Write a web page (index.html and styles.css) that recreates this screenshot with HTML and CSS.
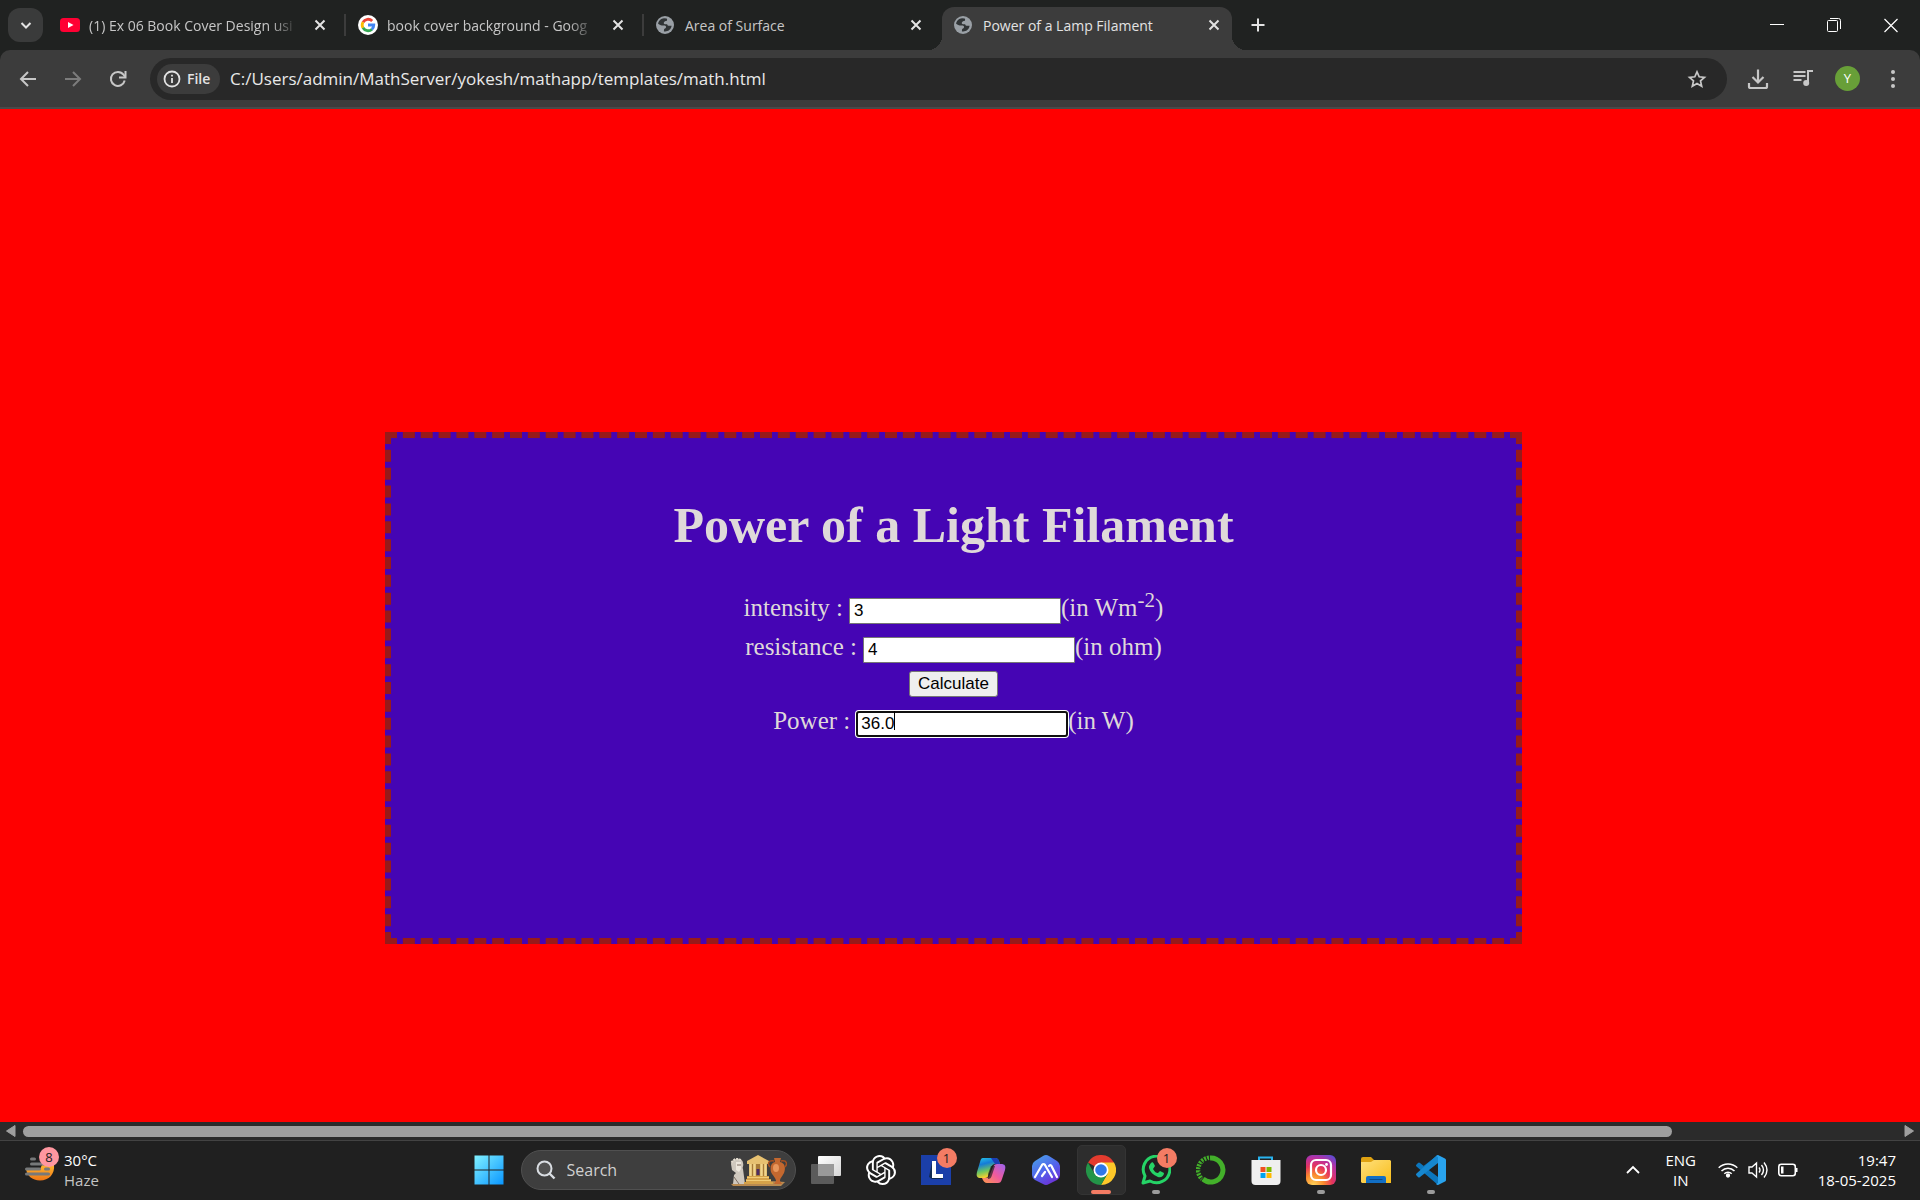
FILE: index.html
```html
<!DOCTYPE html>
<html lang="en">
<head>
<meta charset="utf-8">
<title>Power of a Lamp Filament</title>
<link rel="stylesheet" href="styles.css">
</head>
<body>
<svg class="defs" aria-hidden="true">
  <symbol id="x" viewBox="0 0 20 20"><path d="M5.500 5.500l9 9M14.500 5.500l-9 9" fill="none" stroke="currentColor" stroke-width="2"/></symbol>
  <symbol id="globe" viewBox="0 0 20 20"><circle cx="9" cy="10" r="9" fill="#9aa0a6"/><path d="M8 3.200c-3 .3-5.500 2.600-5.900 5.600 1 .9 2.300 1.500 3.900 1.600l2.600.2c1 .1 1.500.8 1.400 1.700-.1.800-.8 1.100-1.500 1.500-.6.400-.5 1.400-.6 2.600 1.700.4 3.800 0 5.300-1.300 1.300-1.100 2.200-2.500 2.400-4.300l-3.100-.1c-.9-.1-1.200-.7-1.300-1.500-1-.1-2.200.2-2.900-.3-.8-.5-.6-1.600.1-2.200.8-.6 2-.4 2.500-1.100.4-.7.200-1.400-.2-2.100z" fill="#303436"/></symbol>
</svg>

<header class="browser">
  <div class="tabstrip">
    <button class="tab-search" aria-label="Search tabs"><svg width="20" height="20" viewBox="0 0 20 20"><path d="M5.500 8l4.500 4.500L14.500 8" fill="none" stroke="#e3e3e3" stroke-width="2"/></svg></button>
    <nav class="tabs">
      <div class="tab divided">
        <svg class="favicon" viewBox="0 0 20 20"><rect y="3" width="20" height="14" rx="3.500" fill="#ff0033"/><path d="M8 7l5.500 3L8 13z" fill="#fff"/></svg>
        <a class="tab-title faded" href="#">(1) Ex 06 Book Cover Design usi</a>
        <button class="tab-close" aria-label="Close tab"><svg viewBox="0 0 20 20"><use href="#x"/></svg></button>
      </div>
      <div class="tab divided">
        <svg class="favicon" viewBox="0 0 20 20"><circle cx="10" cy="10" r="10" fill="#fff"/><g fill="none" stroke-width="2.800"><path d="M5 7.200A5.800 5.800 0 0 1 14.200 6" stroke="#ea4335"/><path d="M5 12.900a5.800 5.800 0 0 1 0-5.800" stroke="#fbbc04"/><path d="M14 14.200a5.800 5.800 0 0 1-9-1.400" stroke="#34a853"/><path d="M10 10h5.800a5.800 5.800 0 0 1-2 4.400" stroke="#4285f4"/></g></svg>
        <a class="tab-title faded" href="#">book cover background - Goog</a>
        <button class="tab-close" aria-label="Close tab"><svg viewBox="0 0 20 20"><use href="#x"/></svg></button>
      </div>
      <div class="tab">
        <svg class="favicon" viewBox="0 0 20 20"><use href="#globe"/></svg>
        <a class="tab-title" href="#">Area of Surface</a>
        <button class="tab-close" aria-label="Close tab"><svg viewBox="0 0 20 20"><use href="#x"/></svg></button>
      </div>
      <div class="tab active">
        <svg class="favicon" viewBox="0 0 20 20"><use href="#globe"/></svg>
        <a class="tab-title" href="#">Power of a Lamp Filament</a>
        <button class="tab-close" aria-label="Close tab"><svg viewBox="0 0 20 20"><use href="#x"/></svg></button>
      </div>
      <button class="new-tab" aria-label="New tab"><svg width="20" height="20" viewBox="0 0 20 20"><path d="M10 3.500v13M3.500 10h13" stroke="#e3e3e3" stroke-width="2"/></svg></button>
    </nav>
    <div class="window-controls">
      <button aria-label="Minimize"><svg width="16" height="16" viewBox="0 0 16 16"><path d="M1 7.500h14" stroke="#fff"/></svg></button>
      <button aria-label="Restore"><svg width="16" height="16" viewBox="0 0 16 16" fill="none" stroke="#fff"><rect x="1.500" y="3.500" width="10" height="11" rx="1"/><path d="M4 1.500h8.500a2 2 0 0 1 2 2V12"/></svg></button>
      <button aria-label="Close"><svg width="16" height="16" viewBox="0 0 16 16"><path d="M1.500 2l13 13M14.500 2l-13 13" stroke="#fff" stroke-width="1.200"/></svg></button>
    </div>
  </div>

  <div class="toolbar">
    <div class="nav-buttons">
      <button aria-label="Back"><svg width="20" height="20" viewBox="0 0 20 20"><path d="M18 10H3.500M10 3l-7 7 7 7" fill="none" stroke="#c7c7c7" stroke-width="2"/></svg></button>
      <button aria-label="Forward"><svg width="20" height="20" viewBox="0 0 20 20"><path d="M2 10h14.500M10 3l7 7-7 7" fill="none" stroke="#7c7c7c" stroke-width="2"/></svg></button>
      <button aria-label="Reload"><svg width="20" height="20" viewBox="0 0 20 20"><path d="M16.700 11.500A7 7 0 1 1 15.500 5.700L17 7.500" fill="none" stroke="#c7c7c7" stroke-width="2"/><path d="M17.500 2v6.500H11" fill="none" stroke="#c7c7c7" stroke-width="2"/></svg></button>
    </div>
    <div class="omnibox">
      <button class="scheme"><svg width="18" height="18" viewBox="0 0 18 18"><circle cx="9" cy="9" r="7.500" fill="none" stroke="#e3e3e3" stroke-width="1.800"/><path d="M9 8v5M9 4.800v1.800" stroke="#e3e3e3" stroke-width="1.800"/></svg>File</button>
      <input class="address" type="text" aria-label="Address" value="C:/Users/admin/MathServer/yokesh/mathapp/templates/math.html">
      <button class="star" aria-label="Bookmark"><svg width="20" height="20" viewBox="0 0 20 20"><path d="M10 2.800l2.200 5 5.300.5-4 3.600 1.200 5.300-4.700-2.800-4.700 2.800 1.200-5.300-4-3.600 5.300-.5z" fill="none" stroke="#c7c7c7" stroke-width="1.700"/></svg></button>
    </div>
    <div class="tools">
      <button aria-label="Downloads"><svg width="22" height="22" viewBox="0 0 22 22"><path d="M11 1.500V14M5.500 9l5.500 5.500L16.500 9M2 15v3.500a1.500 1.500 0 0 0 1.500 1.500h15a1.500 1.500 0 0 0 1.500-1.500V15" fill="none" stroke="#c7c7c7" stroke-width="2.200"/></svg></button>
      <button aria-label="Media controls"><svg width="22" height="22" viewBox="0 0 22 22"><path d="M1.500 4h12M1.500 8h12M1.500 12h8M16 15V3h5" fill="none" stroke="#c7c7c7" stroke-width="2"/><circle cx="14.200" cy="15" r="3" fill="#c7c7c7"/></svg></button>
      <button aria-label="Profile"><span class="avatar">Y</span></button>
      <button aria-label="Menu"><svg width="22" height="22" viewBox="0 0 22 22" fill="#c7c7c7"><circle cx="11" cy="4" r="2"/><circle cx="11" cy="11" r="2"/><circle cx="11" cy="18" r="2"/></svg></button>
    </div>
  </div>
</header>

<main class="page">
  <form class="box">
    <h1>Power of a Light Filament</h1>
    <div class="row"><label for="intensity">intensity :</label><input class="field" id="intensity" type="text" value="3"><span>(in Wm<sup>-2</sup>)</span></div>
    <div class="row"><label for="resistance">resistance :</label><input class="field" id="resistance" type="text" value="4"><span>(in ohm)</span></div>
    <div class="row action"><button class="calculate" type="button">Calculate</button></div>
    <div class="row"><label for="power">Power :</label><span class="edit"><input class="field focused" id="power" type="text" value="36.0"><i class="caret"></i></span><span>(in W)</span></div>
  </form>
</main>

<div class="scrollbar">
  <svg width="10" height="12" viewBox="0 0 10 12"><path d="M9 .5v11L.5 6z" fill="#9f9f9f" stroke="#9f9f9f" stroke-linejoin="round"/></svg>
  <div class="track"><div class="thumb"></div></div>
  <svg width="10" height="12" viewBox="0 0 10 12"><path d="M1 .5v11L9.500 6z" fill="#9f9f9f" stroke="#9f9f9f" stroke-linejoin="round"/></svg>
</div>

<footer class="taskbar">
  <button class="weather">
    <span class="haze">
      <svg width="30" height="30" viewBox="0 0 30 30"><defs><linearGradient id="sun" x2="0" y2="1"><stop offset="0" stop-color="#ffb62e"/><stop offset="1" stop-color="#ee7617"/></linearGradient></defs><path d="M1 14h14l2-4h12c1 9-5 15.500-14 15.500-8 0-13-5-14-11.500z" fill="url(#sun)"/><path d="M6.500 4h3M6.500 9h17M1.500 14h13M20.500 14h3M1.500 19h22" stroke="#77797a" stroke-width="3" stroke-linecap="round"/></svg>
      <b class="badge pink">8</b>
    </span>
    <span class="two-lines"><span>30°C</span><span class="dim">Haze</span></span>
  </button>

  <nav class="apps">
    <button class="app start" aria-label="Start"><svg width="30" height="30" viewBox="0 0 30 30"><defs><linearGradient id="win" gradientUnits="userSpaceOnUse" x1="0" y1="0" x2="30" y2="30"><stop offset="0" stop-color="#83f3ff"/><stop offset="1" stop-color="#0794ff"/></linearGradient></defs><path d="M.5.500h14v14H.5zM15.500.500h14v14h-14zM.5 15.500h14v14H.5zM15.500 15.500h14v14h-14z" fill="url(#win)"/></svg></button>
    <label class="search">
      <svg width="20" height="20" viewBox="0 0 20 20"><circle cx="8.500" cy="8.500" r="7" fill="#515151" stroke="#d9dde2" stroke-width="2"/><path d="M13.500 13.500l5 5" stroke="#d9dde2" stroke-width="2.400"/></svg>
      <input type="text" placeholder="Search">
      <svg width="58" height="32" viewBox="0 0 58 32"><path d="M2 30q26-5 54-2l-4 4H4z" fill="#b98a50"/><path d="M2 10c0-6 12-7 12-1 1 3-1 4 0 6l2 15H4l1-9 2-2-4-3z" fill="#cfc8be"/><path d="M7 8h5v7l-2 3-3-2z" fill="#ece6dc"/><path d="M8 11h4M5 23l5 7" stroke="#7c6c61"/><path d="M2.500 8.500q4-6 10-2" stroke="#e3dccf" stroke-width="2" fill="none" stroke-dasharray="2 1"/><path d="M18 7L29 1l11 6v3H18z" fill="#e7c171"/><path d="M20 10h18v12H20z" fill="#a87b37"/><path d="M21.500 10v12M25.500 10v12M32.500 10v12M36.500 10v12" stroke="#f2d58b" stroke-width="2.600"/><path d="M27.500 15h3v6h-3z" fill="#4d2c62"/><path d="M18 22h22v3h2v3h2v2H15v-2h2v-3h1z" fill="#d6a249"/><path d="M18 23.500h22M17 26.500h25" stroke="#f1cc76"/><path d="M45 4h7l-1 4c5 1 6 6 4 11-2 4-4 5-4 8l2 3h-8l2-3c0-3-3-5-5-9-1-5 0-9 4-10z" fill="#c4682f"/><path d="M45 7c-7-1-6 4-4 6M52 7c7-1 6 4 4 6" stroke="#a9501f" stroke-width="1.500" fill="none"/><ellipse cx="47" cy="14" rx="3" ry="4" fill="#e8975c"/></svg>
    </label>
    <button class="app" aria-label="Task view"><svg width="30" height="30" viewBox="0 0 30 30"><defs><linearGradient id="tv" x2="1" y2="1"><stop offset="0" stop-color="#fff"/><stop offset="1" stop-color="#d5d5d5"/></linearGradient></defs><rect x="7" y="1" width="23" height="20" rx="1" fill="url(#tv)"/><rect y="9" width="23" height="20" rx="1" fill="#666" opacity=".85"/><path d="M7 9h16v12H7z" fill="#999"/></svg></button>
    <button class="app" aria-label="ChatGPT"><svg width="30" height="30" viewBox="0 0 24 24"><path fill="#fff" d="M22.282 9.821a5.985 5.985 0 0 0-.516-4.910 6.046 6.046 0 0 0-6.510-2.900A6.065 6.065 0 0 0 4.981 4.182a5.985 5.985 0 0 0-3.998 2.900 6.046 6.046 0 0 0 .743 7.097 5.980 5.980 0 0 0 .510 4.911 6.051 6.051 0 0 0 6.515 2.900A5.985 5.985 0 0 0 13.260 24a6.056 6.056 0 0 0 5.772-4.206 5.990 5.990 0 0 0 3.998-2.900 6.056 6.056 0 0 0-.747-7.073zM13.260 22.430a4.476 4.476 0 0 1-2.876-1.040l.141-.081 4.779-2.758a.795.795 0 0 0 .393-.681v-6.737l2.020 1.168a.071.071 0 0 1 .038.052v5.583a4.504 4.504 0 0 1-4.495 4.494zM3.600 18.304a4.471 4.471 0 0 1-.535-3.014l.142.085 4.783 2.759a.771.771 0 0 0 .780 0l5.843-3.369v2.332a.080.080 0 0 1-.033.062L9.740 19.950a4.500 4.500 0 0 1-6.140-1.646zM2.340 7.896a4.485 4.485 0 0 1 2.366-1.973V11.600a.766.766 0 0 0 .388.677l5.815 3.354-2.020 1.169a.076.076 0 0 1-.071 0l-4.830-2.787A4.504 4.504 0 0 1 2.340 7.872zm16.597 3.855l-5.833-3.387L15.119 7.200a.076.076 0 0 1 .071 0l4.830 2.791a4.494 4.494 0 0 1-.676 8.105v-5.678a.790.790 0 0 0-.407-.667zm2.010-3.023l-.141-.085-4.774-2.782a.776.776 0 0 0-.785 0L9.409 9.230V6.897a.066.066 0 0 1 .028-.061l4.830-2.787a4.500 4.500 0 0 1 6.680 4.660zm-12.640 4.135l-2.020-1.164a.080.080 0 0 1-.038-.057V6.075a4.500 4.500 0 0 1 7.375-3.453l-.142.080L8.704 5.460a.795.795 0 0 0-.393.681zm1.097-2.365l2.602-1.500 2.607 1.500v2.999l-2.597 1.500-2.607-1.500z"/></svg></button>
    <button class="app" aria-label="L app"><svg width="30" height="30" viewBox="0 0 30 30"><path d="M0 0h30v30H0z" fill="#1b3fa9"/><path d="M11 7l-3 15 3 2h11v-3H12z" fill="#102a50"/><path d="M13 6v15h9" fill="none" stroke="#fff" stroke-width="4"/></svg><b class="badge">1</b></button>
    <button class="app" aria-label="Copilot"><svg width="30" height="30" viewBox="0 0 30 30"><defs><linearGradient id="c1" x2=".3" y2="1"><stop offset="0" stop-color="#28c8e8"/><stop offset=".35" stop-color="#147bd9"/><stop offset=".7" stop-color="#6fc65e"/><stop offset="1" stop-color="#ffd02c"/></linearGradient><linearGradient id="c2" x1="1" x2="0" y2="1"><stop offset="0" stop-color="#9a63f1"/><stop offset=".5" stop-color="#f05a9d"/><stop offset="1" stop-color="#ff9b4a"/></linearGradient></defs><path d="M7 3h12c3 0 4 2 5 6h-5c-2 0-3 1-4 4l-2 6c-1 3-2 4-4 4H5c-4 0-5-2-4-6L4 7c1-3 1-4 3-4z" fill="url(#c1)"/><path d="M15 3h4c3 0 4 2 5 6h-5z" fill="#1c3eb5"/><path d="M21 9h4c4 0 5 2 4 6l-3 9c-1 3-2 4-4 4H11c-2 0-4-2-5-5h4c2 0 3-1 4-4l3-7c1-2 2-3 4-3z" fill="url(#c2)"/><path d="M12 19l3-8h4l-3 9c-1 3-2 4-4 4z" fill="#202020" opacity=".7"/></svg></button>
    <button class="app" aria-label="AI app"><svg width="30" height="30" viewBox="0 0 30 30"><defs><linearGradient id="hex" x2=".6" y2="1"><stop offset="0" stop-color="#48a9e8"/><stop offset=".6" stop-color="#5262ec"/><stop offset="1" stop-color="#6c35d8"/></linearGradient></defs><path d="M12 1q3-2 6 0l8 5q3 2 3 5v9q0 3-3 5l-8 4q-3 2-6 0l-8-4q-3-2-3-5v-9q0-3 3-5z" fill="url(#hex)"/><path d="M4 22l7-12q1.500-2 3 0l7 12M11 21l3-4M18 11q2-2 3 1l5 10" fill="none" stroke="#fff" stroke-width="2.200" stroke-linecap="round"/></svg></button>
    <button class="app current" aria-label="Chrome"><svg width="30" height="30" viewBox="0 0 30 30"><path d="M15 15L2 7.500A15 15 0 0 1 28 7.500z" fill="#e33b2e"/><path d="M15 7.500h13A15 15 0 0 1 15 30l6.500-11.200z" fill="#fdc829"/><path d="M8.500 18.800L2 7.500A15 15 0 0 0 15 30l6.500-11.200z" fill="#239548"/><circle cx="15" cy="15" r="7.500" fill="#fff"/><circle cx="15" cy="15" r="5.800" fill="#3077e8"/></svg></button>
    <button class="app running" aria-label="WhatsApp"><svg width="30" height="30" viewBox="0 0 30 30"><path d="M2 28l2-7A13.300 13.300 0 1 1 9 26z" fill="#202020" stroke="#25d366" stroke-width="3" stroke-linejoin="round"/><path d="M10 8c1-1 2-1 3 1l1 2-2 3c2 3 3 4 5 4l2-2 4 2c0 3-3 5-6 4-5-2-8-5-9-9-.5-2 1-4 2-5z" fill="#25d366"/></svg><b class="badge">1</b></button>
    <button class="app" aria-label="Anaconda"><svg width="30" height="30" viewBox="0 0 30 30" fill="none" stroke="#43b02a"><path d="M14 3a12 12 0 1 1-7 21" stroke-width="5"/><path d="M13 2.700A12.400 12.400 0 0 0 6 24" stroke-width="4.500" stroke-dasharray="2 1"/><path d="M12 5A11 11 0 0 0 6 21" stroke="#202020" stroke-width="2" stroke-dasharray="1 2.500"/></svg></button>
    <button class="app" aria-label="Microsoft Store"><svg width="30" height="30" viewBox="0 0 30 30"><path d="M8 6V2.500h13V6" fill="none" stroke="#28b3ee" stroke-width="2"/><path d="M.5 5h29v21q0 4-4 4h-21q-4 0-4-4z" fill="#efefef"/><path d="M9.500 12h5v5h-5z" fill="#f05022"/><path d="M15.500 12h5v5h-5z" fill="#7eba00"/><path d="M9.500 18h5v5h-5z" fill="#00a3ee"/><path d="M15.500 18h5v5h-5z" fill="#ffb900"/></svg></button>
    <button class="app running" aria-label="Instagram"><svg width="30" height="30" viewBox="0 0 30 30"><defs><radialGradient id="ig" cx=".25" cy="1" r="1.150"><stop offset="0" stop-color="#ffd45a"/><stop offset=".3" stop-color="#fa8a2d"/><stop offset=".55" stop-color="#e6345d"/><stop offset=".8" stop-color="#b531a5"/><stop offset="1" stop-color="#604bd1"/></radialGradient></defs><rect width="30" height="30" rx="6" fill="url(#ig)"/><rect x="5" y="5" width="20" height="20" rx="5" fill="none" stroke="#fff" stroke-width="2.200"/><circle cx="15" cy="15" r="5" fill="none" stroke="#fff" stroke-width="2.200"/><circle cx="20.500" cy="9.500" r="1.400" fill="#fff"/></svg></button>
    <button class="app" aria-label="File Explorer"><svg width="30" height="30" viewBox="0 0 30 30"><path d="M0 4q0-2 2-2h8l3 3v5H0z" fill="#e0a211"/><defs><linearGradient id="fold" x2="1" y2="1"><stop offset="0" stop-color="#ffe07c"/><stop offset="1" stop-color="#f8bd1a"/></linearGradient></defs><path d="M0 7h10l3-2h16l1 1v22H1l-1-1z" fill="url(#fold)"/><path d="M5 28v-5q0-2 2-2h16q2 0 2 2v5z" fill="#126fc5"/><path d="M9 24.500h12" stroke="#0c4a89" stroke-width="1.200" stroke-linecap="round"/></svg></button>
    <button class="app running" aria-label="Visual Studio Code"><svg width="30" height="30" viewBox="0 0 30 30"><path d="M22 0L9 12 4 8Q3 7 2 8L.5 9.500q-1 1 0 2L22 30V22L7.500 11z" fill="#0c76bd"/><path d="M22 0v8L4 22q-1 1-2 0L.5 20.500q-1-1 0-2L20 1z" fill="#1687cf"/><path d="M22 0l7 3.500q1 .5 1 1.500v20q0 1-1 1.500L22 30q-1 0-2-1l2-1V2l-2-1z" fill="#29a3ee"/></svg></button>
  </nav>

  <div class="tray">
    <button class="chevron" aria-label="Hidden icons"><svg width="16" height="16" viewBox="0 0 16 16"><path d="M2 11l6-6 6 6" fill="none" stroke="#fff" stroke-width="1.800"/></svg></button>
    <button class="language"><span>ENG</span><span>IN</span></button>
    <button class="status" aria-label="Network, sound and battery">
      <svg width="20" height="20" viewBox="0 0 20 20" fill="none" stroke="#fff" stroke-width="1.500"><path d="M.7 7.800a13.200 13.200 0 0 1 18.600 0M3.500 11a9 9 0 0 1 13 0M6.300 13.700a5.300 5.300 0 0 1 7.400 0"/><circle cx="10" cy="15.500" r="1.400" fill="#fff"/></svg>
      <svg width="20" height="20" viewBox="0 0 20 20" fill="none" stroke="#fff" stroke-width="1.400"><path d="M1 7v6h3l4.500 4V3L4 7zM11 7.500q2 2.500 0 5M13.500 5q4 5 0 10M16 2.500q6 7.500 0 15"/></svg>
      <svg width="20" height="20" viewBox="0 0 20 20"><rect x=".8" y="4.200" width="16.500" height="11.600" rx="2.500" fill="none" stroke="#fff" stroke-width="1.600"/><path d="M3 6.500h2.500v7H3zM18 8h1.500v4H18z" fill="#fff"/></svg>
    </button>
    <button class="clock"><span>19:47</span><span>18-05-2025</span></button>
  </div>
</footer>
</body>
</html>
```
FILE: styles.css
```css
* { box-sizing: border-box; }

body {
  margin: 0;
  min-height: 100vh;
  display: flex;
  flex-direction: column;
  background: #ff0000;
  font-family: "Open Sans", "Noto Sans", sans-serif;
}

button {
  margin: 0;
  padding: 0;
  border: 0;
  background: none;
  color: inherit;
  font: inherit;
}

svg { display: block; flex: none; }
.defs { width: 0; height: 0; position: absolute; }

/* Tab strip */
.browser { background: #202221; color: #c7c7c7; }
.tabstrip { height: 50px; display: flex; align-items: center; }
.tab-search {
  width: 35px;
  height: 34px;
  margin: 0 5px 0 8px;
  border-radius: 12px;
  background: #3a3b3b;
  display: grid;
  place-items: center;
}
.tabs { display: flex; align-items: center; height: 100%; flex: 1; min-width: 0; }
.tab {
  position: relative;
  flex: 0 1 298px;
  min-width: 0;
  height: 100%;
  padding: 0 16px 0 12px;
  display: flex;
  align-items: center;
  font-size: 14px;
}
.tab.divided::after {
  content: "";
  position: absolute;
  right: 0;
  top: 14px;
  width: 2px;
  height: 22px;
  background: #3c3c3c;
}
.tab.active {
  flex-basis: 290px;
  height: 43px;
  align-self: flex-end;
  margin-right: 8px;
  padding: 0 8px 7px 12px;
  border-radius: 12px 12px 0 0;
  background: #3c3c3c;
  color: #e3e3e3;
}
.tab.active::before,
.tab.active::after {
  content: "";
  position: absolute;
  bottom: 0;
  width: 14px;
  height: 14px;
}
.tab.active::before { left: -14px; background: radial-gradient(circle at 0 0, transparent 14px, #3c3c3c 14px); }
.tab.active::after { right: -14px; background: radial-gradient(circle at 100% 0, transparent 14px, #3c3c3c 14px); }
.favicon { width: 20px; height: 20px; margin-right: 9px; }
.tab-title {
  flex: 1;
  min-width: 0;
  white-space: nowrap;
  color: inherit;
  text-decoration: none;
}
.tab-title.faded { mask-image: linear-gradient(90deg, #000 calc(100% - 28px), transparent); }
.tab-close { width: 20px; height: 20px; margin-left: 12px; color: #e3e3e3; }
.new-tab { width: 36px; height: 36px; display: grid; place-items: center; }
.window-controls { display: flex; margin-right: 1px; }
.window-controls button { width: 57px; height: 48px; display: grid; place-items: center; }

/* Toolbar */
.toolbar {
  height: 59px;
  padding: 0 5px;
  display: flex;
  align-items: center;
  background: #3c3c3c;
  border-bottom: 2px solid #4a4a4a;
  border-radius: 10px 10px 0 0;
}
.nav-buttons { display: flex; }
.nav-buttons button, .tools button { width: 45px; height: 42px; display: grid; place-items: center; }
.omnibox {
  flex: 1;
  height: 42px;
  margin-left: 10px;
  padding: 0 20px 0 7px;
  border-radius: 21px;
  background: #282828;
  display: flex;
  align-items: center;
}
.scheme {
  width: 63px;
  height: 30px;
  border-radius: 15px;
  background: #3c3c3c;
  color: #e3e3e3;
  font-size: 14px;
  font-weight: 600;
  display: flex;
  align-items: center;
  gap: 6px;
  padding-left: 6px;
}
.address {
  flex: 1;
  min-width: 0;
  margin-left: 10px;
  padding: 0;
  border: 0;
  background: none;
  color: #e8e8e8;
  font: 17px "Open Sans", "Noto Sans", sans-serif;
}
.tools { display: flex; margin-left: 8px; }
.avatar {
  width: 25px;
  height: 25px;
  border-radius: 50%;
  background: #689f38;
  color: #fff;
  font-size: 13px;
  line-height: 25px;
  text-align: center;
}

/* Page content */
.page {
  flex: 1;
  display: grid;
  grid-template-columns: 385fr 1137fr 398fr;
  align-items: start;
  padding: 323px 0 64px;
}
.box {
  grid-column: 2;
  min-height: 512px;
  padding: 25px;
  border: 6px dashed #971a1a;
  background: #4505b4;
  color: #dfd9d9;
  font: 25px/29px "Liberation Serif", "Times New Roman", serif;
  text-align: center;
}
.box h1 { margin: 34px 0; font-size: 50px; line-height: 57px; }
.row { height: 39px; display: flex; justify-content: center; align-items: baseline; padding: 5px 0; }
.row.action { height: 35px; }
.row label { margin-right: 6px; }
.row sup { font-size: 21px; line-height: 0; }
.field {
  width: 212px;
  height: 26px;
  padding: 1px 4px;
  border: 1px solid #767676;
  border-radius: 1px;
  background: #fff;
  color: #000;
  font: 17px "Liberation Sans", Arial, sans-serif;
}
.edit { position: relative; }
.field.focused {
  padding: 0 3px;
  border: 2px solid #101010;
  border-radius: 3px;
  box-shadow: 0 0 0 1px #fff;
  outline: 0;
}
.caret { position: absolute; left: 38px; top: 5px; width: 1px; height: 19px; background: #000; }
.calculate {
  height: 26px;
  padding: 0 8px;
  border: 1px solid #767676;
  border-radius: 3px;
  background: #efefef;
  color: #000;
  font: 17px "Liberation Sans", Arial, sans-serif;
}

/* Horizontal scrollbar */
.scrollbar {
  height: 18px;
  padding: 0 6px;
  display: flex;
  align-items: center;
  gap: 7px;
  background: #2b2b2b;
}
.track { flex: 1; }
.thumb { width: 88%; height: 11px; border-radius: 6px; background: #9f9f9f; }

/* Taskbar */
.taskbar {
  height: 60px;
  padding-bottom: 2px;
  display: grid;
  grid-template-columns: 1fr auto 1fr;
  align-items: center;
  border-top: 1px solid #434343;
  background: #202020;
  color: #fff;
  font-size: 15px;
  line-height: 20px;
}
.weather { justify-self: start; margin-left: 25px; display: flex; align-items: center; gap: 9px; text-align: left; }
.haze { position: relative; }
.two-lines, .language, .clock { display: flex; flex-direction: column; }
.dim { color: #c4c4c4; }
.badge {
  position: absolute;
  top: 3px;
  right: 7px;
  width: 20px;
  height: 20px;
  border-radius: 50%;
  background: #f47c64;
  color: #202020;
  font-size: 13px;
  font-weight: 400;
  line-height: 20px;
  text-align: center;
}
.badge.pink { top: -8px; right: -4px; background: #ff97a0; }
.apps { display: flex; align-items: center; }
.app { position: relative; width: 55px; height: 50px; display: grid; place-items: center; }
.app.current::before {
  content: "";
  position: absolute;
  inset: 0 3px;
  border: 1px solid #343434;
  border-radius: 5px;
  background: #2d2d2d;
}
.app.current svg { position: relative; }
.app.current::after,
.app.running::after {
  content: "";
  position: absolute;
  bottom: 1px;
  width: 8px;
  height: 4px;
  border-radius: 2px;
  background: #9b9b9b;
}
.app.current::after { width: 20px; background: #f47c64; }
.search {
  width: 275px;
  height: 40px;
  margin: 0 3px 0 4px;
  padding: 0 8px 0 14px;
  display: flex;
  align-items: center;
  gap: 11px;
  border: 1px solid #505050;
  border-radius: 20px;
  background: #3e3e3e;
}
.search input {
  flex: 1;
  min-width: 0;
  padding: 0;
  border: 0;
  background: none;
  font: 16px "Open Sans", "Noto Sans", sans-serif;
}
.search input::placeholder { color: #d0d0d0; opacity: 1; }
.tray { justify-self: end; display: flex; align-items: center; margin-right: 24px; }
.chevron { margin-right: 25px; }
.language { width: 30px; margin-right: 22px; align-items: center; }
.status { display: flex; gap: 10px; margin-right: 20px; }
.clock { align-items: flex-end; }
```
